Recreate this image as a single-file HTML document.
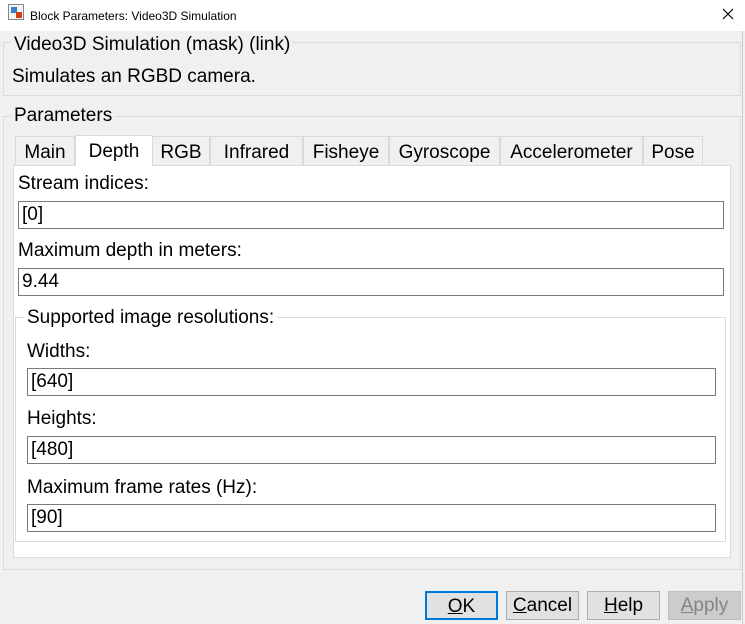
<!DOCTYPE html>
<html><head><style>
*{margin:0;padding:0;box-sizing:border-box}
body{width:745px;height:624px;background:#f0f0f0;font-family:"Liberation Sans",sans-serif;font-size:19px;color:#000;position:relative;overflow:hidden}
.a{position:absolute}
.t{position:absolute;white-space:nowrap;line-height:20px}
.grp{position:absolute;border:1px solid #dcdcdc}
.inp{position:absolute;background:#fff;border:1px solid #7a7a7a;padding-left:3px;line-height:26px}
.tab{position:absolute;top:136px;height:29px;border:1px solid #d9d9d9;border-bottom:none;background:#f0f0f0;text-align:center;line-height:31px}
.btn{position:absolute;top:591px;height:29px;background:#e1e1e1;border:1px solid #adadad;text-align:center;line-height:28px}
</style></head><body>
<div class="a" style="left:0;top:0;width:745px;height:31px;background:#fff"></div>
<div class="a" style="left:8px;top:4px;width:16px;height:16px;border:1px solid #888;background:#f4f4f4"></div>
<div class="a" style="left:11px;top:7px;width:6px;height:6px;background:#3a7fc8"></div>
<div class="a" style="left:16px;top:12px;width:6px;height:6px;background:#d04010"></div>
<div class="t" style="left:30px;top:6px;font-size:12px">Block Parameters: Video3D Simulation</div>
<svg class="a" style="left:722px;top:8px" width="12" height="12"><path d="M1 1L11 11M11 1L1 11" stroke="#000" stroke-width="1.2"/></svg>
<div class="a" style="left:742px;top:31px;width:1px;height:593px;background:#ccc"></div>

<div class="grp" style="left:3px;top:42px;width:738px;height:54px"></div>
<div class="t" style="left:11px;top:35px;background:#f0f0f0;padding:0 3px">Video3D Simulation (mask) (link)</div>
<div class="t" style="left:12px;top:67px">Simulates an RGBD camera.</div>

<div class="grp" style="left:3px;top:116px;width:738px;height:454px"></div>
<div class="t" style="left:11px;top:106px;background:#f0f0f0;padding:0 3px">Parameters</div>

<div class="tab" style="left:15px;width:60px">Main</div>
<div class="tab" style="left:75px;width:78px;top:135px;height:31px;background:#fff;z-index:2">Depth</div>
<div class="tab" style="left:152px;width:58px">RGB</div>
<div class="tab" style="left:210px;width:93px">Infrared</div>
<div class="tab" style="left:303px;width:86px">Fisheye</div>
<div class="tab" style="left:389px;width:111px">Gyroscope</div>
<div class="tab" style="left:500px;width:143px">Accelerometer</div>
<div class="tab" style="left:643px;width:60px">Pose</div>
<div class="a" style="left:13px;top:165px;width:718px;height:393px;background:#fff;border:1px solid #dcdcdc"></div>

<div class="t" style="left:18px;top:174px">Stream indices:</div>
<div class="inp" style="left:18px;top:201px;width:706px;height:28px">[0]</div>
<div class="t" style="left:18px;top:241px">Maximum depth in meters:</div>
<div class="inp" style="left:18px;top:268px;width:706px;height:28px">9.44</div>

<div class="grp" style="left:15px;top:317px;width:711px;height:225px"></div>
<div class="t" style="left:24px;top:308px;background:#fff;padding:0 3px">Supported image resolutions:</div>
<div class="t" style="left:27px;top:342px">Widths:</div>
<div class="inp" style="left:27px;top:368px;width:689px;height:28px">[640]</div>
<div class="t" style="left:27px;top:409px">Heights:</div>
<div class="inp" style="left:27px;top:436px;width:689px;height:28px">[480]</div>
<div class="t" style="left:27px;top:478px">Maximum frame rates (Hz):</div>
<div class="inp" style="left:27px;top:504px;width:689px;height:28px">[90]</div>

<div class="btn" style="left:425px;width:73px;border:2px solid #0078d7"><u>O</u>K</div>
<div class="btn" style="left:506px;width:73px"><u>C</u>ancel</div>
<div class="btn" style="left:587px;width:73px"><u>H</u>elp</div>
<div class="btn" style="left:668px;width:73px;background:#cccccc;border-color:#bfbfbf;color:#838383"><u>A</u>pply</div>
</body></html>
